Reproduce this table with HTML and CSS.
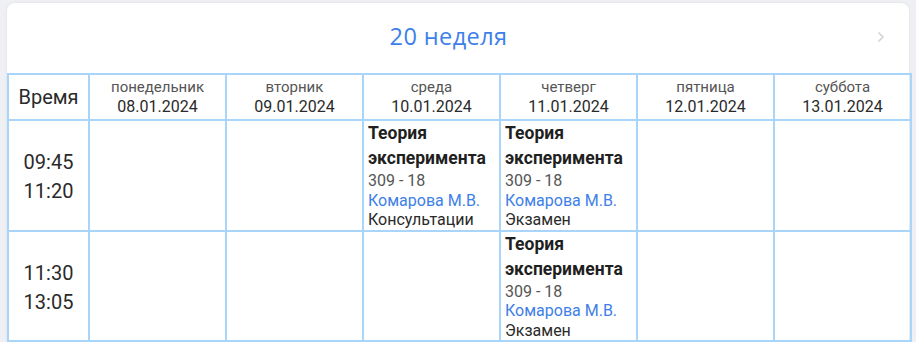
FILE: index.html
```html
<!DOCTYPE html>
<html lang="ru">
<head>
<meta charset="utf-8">
<link rel="stylesheet" href="styles.css">
</head>
<body>
<div class="card">
  <div class="card-head">
    <h1 class="week">20 неделя</h1>
    <span class="next">
      <svg width="8" height="12" viewBox="0 0 8 12"><path d="M1.5 1.5 L6 6 L1.5 10.5" fill="none" stroke="#d0d3d8" stroke-width="1.6"/></svg>
    </span>
  </div>
  <table class="grid">
    <colgroup>
      <col class="c-time">
      <col class="c-day"><col class="c-day"><col class="c-day"><col class="c-day"><col class="c-day"><col class="c-day">
    </colgroup>
    <thead>
      <tr>
        <th class="h-time">Время</th>
        <th><div class="dname">понедельник</div><div class="ddate">08.01.2024</div></th>
        <th><div class="dname">вторник</div><div class="ddate">09.01.2024</div></th>
        <th><div class="dname">среда</div><div class="ddate">10.01.2024</div></th>
        <th><div class="dname">четверг</div><div class="ddate">11.01.2024</div></th>
        <th><div class="dname">пятница</div><div class="ddate">12.01.2024</div></th>
        <th><div class="dname">суббота</div><div class="ddate">13.01.2024</div></th>
      </tr>
    </thead>
    <tbody>
      <tr class="row">
        <td class="time"><div>09:45</div><div>11:20</div></td>
        <td></td>
        <td></td>
        <td class="lesson"><div class="subj">Теория эксперимента</div><div class="room">309 - 18</div><div class="teacher">Комарова М.В.</div><div class="kind">Консультации</div></td>
        <td class="lesson"><div class="subj">Теория эксперимента</div><div class="room">309 - 18</div><div class="teacher">Комарова М.В.</div><div class="kind">Экзамен</div></td>
        <td></td>
        <td></td>
      </tr>
      <tr class="row">
        <td class="time"><div>11:30</div><div>13:05</div></td>
        <td></td>
        <td></td>
        <td></td>
        <td class="lesson"><div class="subj">Теория эксперимента</div><div class="room">309 - 18</div><div class="teacher">Комарова М.В.</div><div class="kind">Экзамен</div></td>
        <td></td>
        <td></td>
      </tr>
    </tbody>
  </table>
</div>
</body>
</html>
```
FILE: styles.css
```css
html, body {
  margin: 0;
  padding: 0;
  background: #eef0f3;
  font-family: Roboto, "Liberation Sans", sans-serif;
  color: #222;
  overflow: hidden;
}
.card {
  margin: 3px 0 0 7px;
  width: 902px;
  background: #fff;
  border-radius: 8px 8px 0 0;
  box-shadow: 0 0 3px rgba(0,0,0,0.08);
}
.card-head {
  position: relative;
  height: 70px;
  display: flex;
  align-items: center;
  justify-content: center;
}
.week {
  margin: 0 19px 4px 0;
  font-family: "Open Sans", sans-serif;
  font-weight: 500;
  font-size: 23.5px;
  color: #3d80e8;
  letter-spacing: 0.4px;
}
.next {
  position: absolute;
  right: 24px;
  top: 28px;
  display: flex;
}
.grid {
  width: 902px;
  table-layout: fixed;
  border-collapse: collapse;
}
.c-time { width: 81px; }
.c-day { width: 137px; }
.grid th, .grid td {
  border: 2px solid #a9d5fa;
  padding: 0;
}
.grid th {
  height: 44px;
  font-weight: 400;
  text-align: center;
  vertical-align: middle;
}
.h-time {
  font-size: 20px;
  color: #2a2a2a;
}
.dname {
  font-size: 15px;
  color: #555;
  line-height: 20px;
}
.ddate {
  font-size: 16px;
  color: #2a2a2a;
  line-height: 20px;
}
.row td { height: 104px; }
.grid td.time {
  text-align: center;
  vertical-align: middle;
  font-size: 20px;
  line-height: 29px;
  color: #2a2a2a;
  padding-top: 4px;
}
.grid td.lesson {
  vertical-align: top;
  padding: 0 4px;
}
.subj {
  font-weight: 700;
  font-size: 17.5px;
  line-height: 25px;
  color: #1f1f1f;
}
.room, .teacher, .kind {
  font-size: 16px;
  line-height: 19.5px;
}
.room { color: #555; }
.teacher { color: #3d80e8; }
.kind { color: #2a2a2a; }
```
